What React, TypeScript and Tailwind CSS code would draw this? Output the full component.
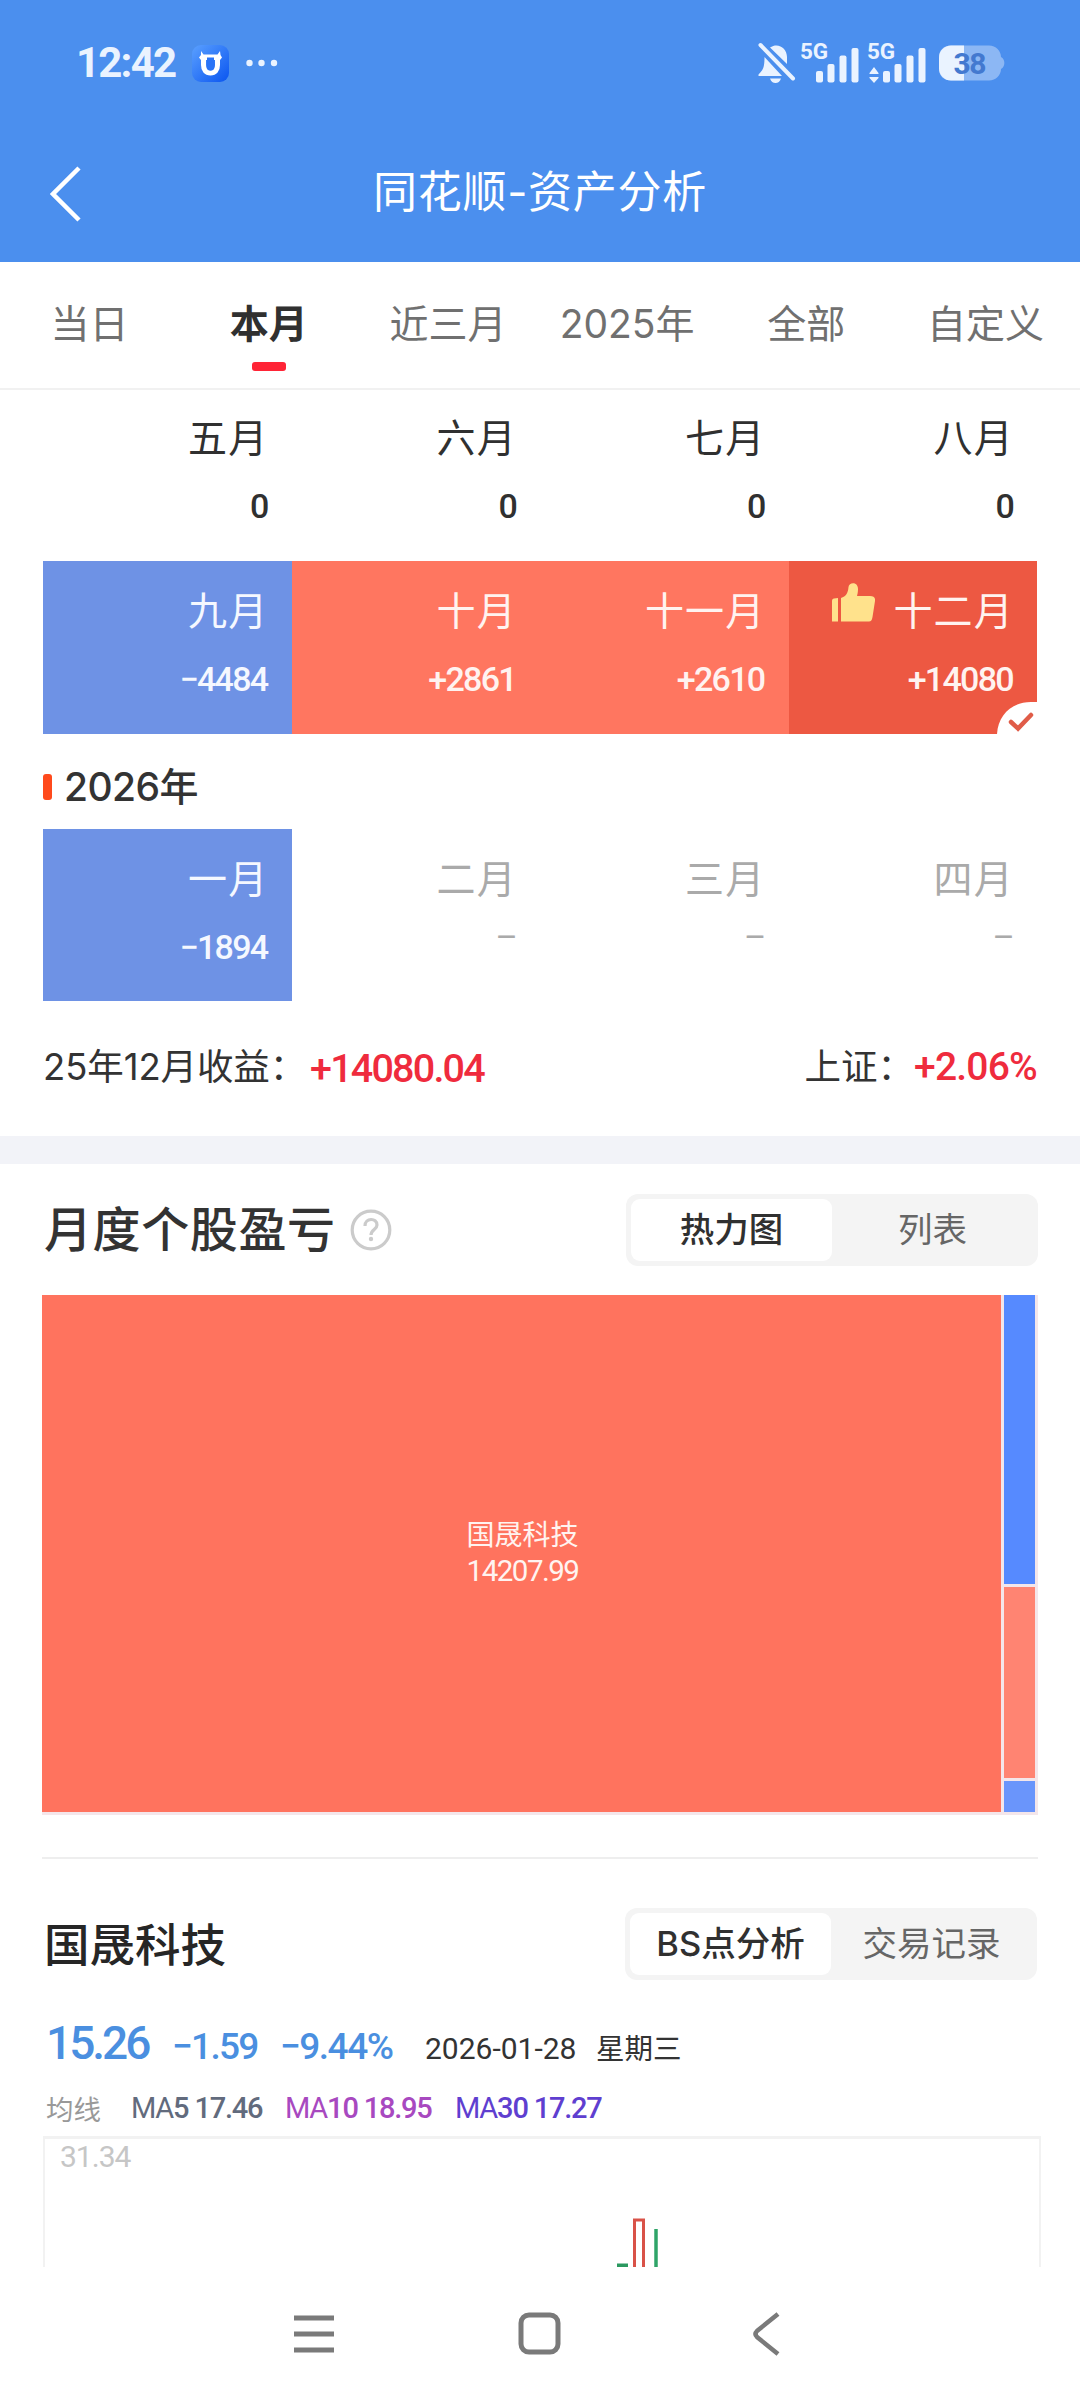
import React, { useState } from 'react';
import clsx from 'clsx';

interface MonthItem {
  name: string;
  value: string;
  tone: 'plain' | 'loss' | 'gain' | 'best' | 'future';
}

const tabs = ['当日', '本月', '近三月', '2025年', '全部', '自定义'];

const months2025: MonthItem[][] = [
  [
    { name: '五月', value: '0', tone: 'plain' },
    { name: '六月', value: '0', tone: 'plain' },
    { name: '七月', value: '0', tone: 'plain' },
    { name: '八月', value: '0', tone: 'plain' },
  ],
  [
    { name: '九月', value: '−4484', tone: 'loss' },
    { name: '十月', value: '+2861', tone: 'gain' },
    { name: '十一月', value: '+2610', tone: 'gain' },
    { name: '十二月', value: '+14080', tone: 'best' },
  ],
];

const months2026: MonthItem[] = [
  { name: '一月', value: '−1894', tone: 'loss' },
  { name: '二月', value: '–', tone: 'future' },
  { name: '三月', value: '–', tone: 'future' },
  { name: '四月', value: '–', tone: 'future' },
];

const toneClass = {
  plain: 'text-[#303030]',
  loss: 'bg-[#6e92e5] text-[#f5f8ff]',
  gain: 'bg-[#ff7660] text-[#fff3f0]',
  best: 'bg-[#ed5842] text-[#fff3f0]',
  future: 'text-[#aaaaaa]',
};

function SignalBars({ data = false }: { data?: boolean }) {
  return (
    <svg width="60" height="58" viewBox="0 -8 60 58" fill="#eaf3ff">
      <text
        x="0"
        y="17"
        fontSize="22.5"
        fontWeight="700"
        fontFamily="Roboto, sans-serif"
        textLength="28"
      >
        5G
      </text>
      {data && <path d="M7 25 11.5 31V32H2.500V31ZM2.500 35H11.500V36L7 41 2.500 36Z" />}
      <rect x="16" y="29" width="7" height="11.500" rx="2" />
      <rect x="27.500" y="22" width="7" height="18.500" rx="2" />
      <rect x="39.500" y="13.500" width="7" height="27" rx="2" />
      <rect x="51.500" y="6" width="7" height="34.500" rx="2" />
    </svg>
  );
}

function StatusBar() {
  return (
    <div className="flex h-[126px] items-center pl-[76px] pr-[74px] text-[#eaf3ff]">
      <span className="w-[116px] font-[Roboto] text-[42px] leading-none font-bold tracking-[-1.800px]">
        12:42
      </span>
      <svg width="37" height="37" viewBox="0 0 37 37">
        <defs>
          <linearGradient id="app" x1="0" y1="0" x2="1" y2="1">
            <stop offset="0" stopColor="#5aa0ff" />
            <stop offset="1" stopColor="#0a55f0" />
          </linearGradient>
        </defs>
        <rect width="37" height="37" rx="9" fill="url(#app)" />
        <path
          d="M11.500 12V20C11.500 25 14 28 18.500 28S25.500 25 25.500 20V12"
          fill="none"
          stroke="#fff"
          strokeWidth="5"
        />
        <path d="M9 6 11.500 9.500H25.500L28 6 28.500 10 30 12.500 28 15H9L7 12.500 9 10Z" fill="#fff" />
        <path d="M15 12.500H22V21C22 24 20.500 25.500 18.500 25.500S15 24 15 21Z" fill="#2a74f7" />
      </svg>
      <svg className="ml-[17px]" width="32" height="8" viewBox="0 0 32 8" fill="#eaf3ff">
        <circle cx="3.500" cy="4" r="3.200" />
        <circle cx="15.500" cy="4" r="3.200" />
        <circle cx="28" cy="4" r="3.200" />
      </svg>

      <div className="ml-auto flex items-center">
        <svg width="38" height="42" viewBox="0 0 38 42" fill="#eaf3ff">
          <path d="M12 5.500C20 0 29 6 29 15V22ZM6.500 15 24 34H.5V32.500C5 28 6.500 26 6.500 15ZM12 36.500H23C22 39.500 20 41 17.500 41S13 39.500 12 36.500Z" />
          <path d="M3 3 35 36" stroke="#4b8fee" strokeWidth="8" />
          <path d="M2.500 3 35 36.500" stroke="#eaf3ff" strokeWidth="4" strokeLinecap="round" />
        </svg>
        <div className="ml-1 flex gap-[7px]">
          <SignalBars />
          <SignalBars data />
        </div>
        <svg className="ml-[12px]" width="67" height="36" viewBox="0 0 67 36">
          <defs>
            <clipPath id="battery">
              <rect y="0" width="25" height="36" />
            </clipPath>
          </defs>
          <path d="M12 .5H50C57 .5 62 6 62 12 66.500 14 66.500 22 62 24 62 30 57 35.500 50 35.500H12C5 35.500 0 31 0 24V12C0 5 5 .5 12 .5Z" fill="#8cb7f4" />
          <rect y=".5" width="62" height="35" rx="12" fill="#eaf3ff" clipPath="url(#battery)" />
          <text
            x="14.500"
            y="28.500"
            fontSize="30"
            fontWeight="700"
            fontFamily="Roboto, sans-serif"
            fill="#4379d0"
            textLength="33"
          >
            38
          </text>
        </svg>
      </div>
    </div>
  );
}

function MonthCell({ item, first }: { item: MonthItem; first?: boolean }) {
  return (
    <div
      className={clsx(
        'relative flex flex-1 flex-col items-end pr-[23px]',
        first ? 'h-[171px] pt-[28px]' : 'h-[173px] pt-[30px]',
        toneClass[item.tone]
      )}
    >
      <div className="flex gap-[18px]">
        {item.tone === 'best' && (
          <svg className="-mt-[8px]" width="43" height="39" viewBox="0 0 43 39" fill="#ffe28c">
            <path d="M2 15.500 6 15V38.500H0V18C0 16.500.8 15.700 2 15.500ZM9 15C14 13.500 16 10 16.500 4 17 -1 26 -1.500 26 6 26 9 25.500 11 25 13H38C42 13 43.500 15 43 18L40.500 34C40 37 39 38.500 37 38.500H9Z" />
          </svg>
        )}
        <span className="text-[39px] leading-none tracking-[1.200px]">{item.name}</span>
      </div>
      <span
        className={clsx(
          'pr-px font-[Roboto] text-[34px] leading-none tracking-[-1.700px]',
          item.tone === 'future' ? 'mt-[22px]' : 'mt-[32px] font-medium'
        )}
      >
        {item.value}
      </span>
      {item.tone === 'best' && (
        <svg className="absolute right-0 bottom-0" width="40" height="32" viewBox="0 0 40 32">
          <path d="M0 32C1 13 15 0 34 0H40V32Z" fill="#fff" />
          <path
            d="M14 20 21 26.500 34 13"
            fill="none"
            stroke="#e05c48"
            strokeWidth="4.500"
            strokeLinecap="round"
          />
        </svg>
      )}
    </div>
  );
}

function Segment({ options }: { options: string[] }) {
  const [active, setActive] = useState(0);
  return (
    <div className="flex h-[72px] w-[412px] rounded-xl bg-[#f4f4f4] p-[5px]">
      {options.map((option, i) => (
        <button
          key={option}
          onClick={() => setActive(i)}
          className={clsx(
            'flex flex-1 items-center justify-center rounded-[9px] pt-px text-[34.5px] leading-none',
            i === active ? 'bg-white font-medium text-[#303030]' : 'text-[#666666]'
          )}
        >
          {option}
        </button>
      ))}
    </div>
  );
}

export default function App() {
  const [tab, setTab] = useState(1);

  return (
    <div className="flex h-[2400px] w-[1080px] flex-col overflow-hidden bg-white font-[Inter,'Noto_Sans_CJK_SC',sans-serif] text-[#333333]">
      {/* Header */}
      <header className="h-[262px] bg-[#4b8fee]">
        <StatusBar />
        <div className="flex h-[136px] items-center px-[50px] text-white">
          <svg width="32" height="56" viewBox="0 0 32 56" fill="none" stroke="#fff" strokeWidth="4.500">
            <path d="M29 2 3 28 29 54" />
          </svg>
          <h1 className="mr-8 flex-1 pb-[5px] text-center text-[44px] leading-none tracking-[.7px]">
            同花顺-资产分析
          </h1>
        </div>
      </header>

      {/* Range tabs */}
      <nav className="flex h-[128px] shrink-0 border-b-2 border-[#f1f1f1] pr-[5px]">
        {tabs.map((name, i) => (
          <button key={name} onClick={() => setTab(i)} className="flex flex-1 flex-col items-center pt-[42px]">
            <span
              className={clsx(
                'text-[39px] leading-none',
                i === tab ? 'font-bold text-[#303030]' : 'text-[#707070]'
              )}
            >
              {name}
            </span>
            {i === tab && <span className="mt-[19px] h-[9px] w-[34px] rounded-[3px] bg-[#ff2436]" />}
          </button>
        ))}
      </nav>

      {/* Month calendar */}
      <section className="px-[43px]">
        {months2025.map((row, i) => (
          <div key={i} className="flex">
            {row.map((item) => (
              <MonthCell key={item.name} item={item} first={i === 0} />
            ))}
          </div>
        ))}
        <div className="flex h-[95px] items-center gap-[12px] pt-[9px]">
          <span className="mt-[2px] h-[26px] w-[9px] rounded-[3px] bg-[#ff4a1c]" />
          <span className="text-[39px] leading-none font-medium tracking-[-.6px]">2026年</span>
        </div>
        <div className="flex h-[172px] overflow-hidden">
          {months2026.map((item) => (
            <MonthCell key={item.name} item={item} />
          ))}
        </div>
        <div className="flex h-[135px] items-center justify-between pb-[2px] text-[36.500px] leading-none">
          <div className="flex items-center">
            <span className="w-[267px] tracking-[-.1px] whitespace-nowrap">25年12月收益：</span>
            <span className="pt-[2px] font-[Roboto] text-[39.500px] font-medium tracking-[-1.800px] text-[#ef2b3d]">
              +14080.04
            </span>
          </div>
          <div className="flex items-center">
            <span>上证：</span>
            <span className="font-[Roboto] text-[39px] font-medium tracking-[-.8px] text-[#ef2b3d]">
              +2.06%
            </span>
          </div>
        </div>
      </section>

      <div className="h-[28px] shrink-0 bg-[#f2f3f8]" />

      {/* Monthly profit by stock */}
      <section className="px-[42px]">
        <div className="flex h-[131px] items-center">
          <h2 className="pl-[2px] text-[48px] leading-none font-medium tracking-[.6px]">月度个股盈亏</h2>
          <svg className="ml-[14px]" width="42" height="42" viewBox="0 0 42 42" fill="none" stroke="#cbcbcb" strokeWidth="3.200">
            <circle cx="21" cy="21" r="18.800" />
            <path d="M15 17C15 8.500 27 8.500 27 16 27 20.500 21 20.500 21 26" />
            <circle cx="21" cy="30" r="1.200" fill="#cbcbcb" strokeWidth="2" />
          </svg>
          <div className="ml-auto">
            <Segment options={['热力图', '列表']} />
          </div>
        </div>
        <div className="flex h-[520px] gap-[3px] bg-[#f4e6ea] pr-[3px] pb-[3px]">
          <div className="flex flex-1 flex-col items-center justify-center bg-[#ff735e] pl-[2px] text-[#fff3f0]">
            <span className="text-[28px] leading-none">国晟科技</span>
            <span className="mt-[8px] font-[Roboto] text-[29.500px] leading-none tracking-[-1.500px]">14207.99</span>
          </div>
          <div className="flex w-[31px] flex-col gap-[3px]">
            <div className="h-[289px] bg-[#568aff]" />
            <div className="h-[191px] bg-[#ff8472]" />
            <div className="flex-1 bg-[#6a95fb]" />
          </div>
        </div>
        <div className="mt-[42px] h-[2px] bg-[#eeeeee]" />
      </section>

      {/* Stock detail */}
      <section className="px-[43px]">
        <div className="flex h-[170px] items-center">
          <h2 className="pt-[3px] pl-[1px] text-[45.500px] leading-none font-medium text-[#262626]">国晟科技</h2>
          <div className="ml-auto">
            <Segment options={['BS点分析', '交易记录']} />
          </div>
        </div>
        <div className="-mt-[9px] flex h-[61px] items-baseline pl-[3px] font-[Roboto] leading-none font-medium text-[#4a8fe0]">
          <span className="w-[126px] text-[46px] tracking-[-3px]">15.26</span>
          <span className="w-[108px] text-[37px] tracking-[-1.700px]">−1.59</span>
          <span className="w-[145px] text-[37px] tracking-[-1.500px]">−9.44%</span>
          <span className="w-[171px] text-[30px] font-normal text-[#333333]">2026-01-28</span>
          <span className="font-['Noto_Sans_CJK_SC'] text-[28.500px] font-normal text-[#333333]">星期三</span>
        </div>
        <div className="flex h-[55px] items-center pl-[3px] font-[Roboto] text-[29px] leading-none tracking-[-1.200px]">
          <span className="w-[85px] font-['Noto_Sans_CJK_SC'] text-[27.500px] tracking-normal text-[#999999]">均线</span>
          <span className="w-[154px] text-[#626b7d]">
            MA<b className="font-medium">5 17.46</b>
          </span>
          <span className="w-[170px] text-[#a849c0]">
            MA<b className="font-medium">10 18.95</b>
          </span>
          <span className="text-[#5f3fd0]">
            MA<b className="font-medium">30 17.27</b>
          </span>
        </div>
        <div className="relative h-[131px] w-[998px] border-x-2 border-t-[3px] border-[#f2f2f2] pl-[15px]">
          <span className="block pt-[3px] font-[Roboto] text-[30px] leading-none tracking-[-1px] text-[#c6c6c6]">
            31.34
          </span>
          <svg className="absolute right-[377px] bottom-0" width="48" height="50" viewBox="0 0 48 50" fill="none">
            <path d="M3 48.500H14" stroke="#2b9960" strokeWidth="4" />
            <path d="M20.500 52V3H29.500V52" stroke="#d95248" strokeWidth="3" />
            <path d="M42 12V50" stroke="#2fa468" strokeWidth="3.500" />
          </svg>
        </div>
      </section>

      {/* System navigation */}
      <footer className="flex flex-1 items-center">
        <svg className="ml-[294px]" width="40" height="40" viewBox="0 0 40 40" stroke="#7a7a7a" strokeWidth="5">
          <path d="M0 4H40M0 20H40M0 36H40" />
        </svg>
        <svg className="ml-[184px]" width="43" height="43" viewBox="0 0 43 43" fill="none" stroke="#7a7a7a" strokeWidth="5">
          <rect x="3" y="3" width="37" height="37" rx="8" />
        </svg>
        <svg className="ml-[191px]" width="30" height="44" viewBox="0 0 30 44" fill="none" stroke="#7a7a7a" strokeWidth="4.500">
          <path d="M26 2 5 19Q2 22 5 25L26 42" />
        </svg>
      </footer>
    </div>
  );
}
